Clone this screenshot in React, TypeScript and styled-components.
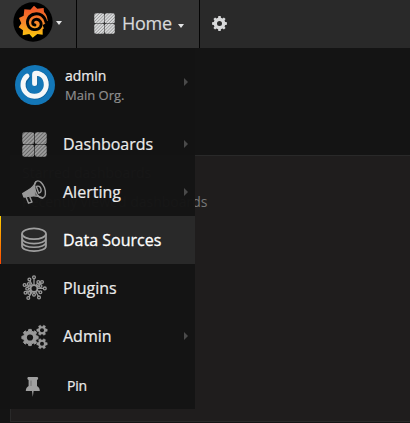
import React from 'react';
import styled, { createGlobalStyle } from 'styled-components';

const GlobalStyle = createGlobalStyle`
  * { box-sizing: border-box; }
  body {
    margin: 0;
    background: #141414;
    font-family: 'Open Sans', 'Noto Sans', sans-serif;
    overflow: hidden;
  }
  svg { display: block; flex: none; }
`;

const Page = styled.div`
  position: relative;
  display: flex;
  flex-direction: column;
  width: 410px;
  height: 423px;
  overflow: hidden;
`;

const NavBar = styled.header`
  display: flex;
  flex: none;
  height: 48px;
  background: #292929;
`;

const LogoButton = styled.div`
  display: flex;
  width: 77px;
  padding: 2px 0 0 13px;
  background: #333;
  border-right: 1px solid #050505;
`;

const HomeButton = styled.div`
  display: flex;
  width: 123px;
  padding: 0 0 0 17px;
  background: #333;
  border-right: 1px solid #050505;
`;

const HomeIcon = styled.div`
  padding-top: 13px;
`;

const HomeLabel = styled.span`
  margin-left: 7px;
  width: 51px;
  font-size: 18px;
  line-height: 47px;
  letter-spacing: -0.25px;
  color: #d8d9da;
  -webkit-text-stroke: 0.2px;
`;

const Caret = styled.span<{ $top: number; $left: number }>`
  width: 0;
  height: 0;
  margin: ${(p) => p.$top}px 0 0 ${(p) => p.$left}px;
  border: solid transparent;
  border-width: 4px 3.5px 0;
  border-top-color: #e3e4e5;
`;

const SettingsButton = styled.div`
  padding: 16px 12px;
`;

const Panel = styled.main`
  flex: none;
  height: 267px;
  margin: 107px 0 0 10px;
  padding: 8px 0 0 11px;
  border: 1px solid #292929;
  border-right: 0;
  background: #1f1d1d;
`;

const PanelHeading = styled.div`
  height: 29px;
  font-size: 14px;
  line-height: 18px;
  color: #777;
`;

const SideMenu = styled.nav`
  position: absolute;
  top: 48px;
  left: 0;
  width: 195px;
  height: 361px;
  background: rgba(20, 20, 20, 0.97);
`;

const MenuRow = styled.div<{ $active?: boolean }>`
  display: flex;
  align-items: center;
  height: 48px;
  padding-left: 20px;
  background: ${(p) => (p.$active ? '#292929' : 'transparent')};
  ${(p) =>
    p.$active &&
    `
    padding-left: 19px;
    border-left: 1px solid;
    border-image: linear-gradient(#ffd500, #ff4400 99%) 1;
  `}
`;

const MenuLabel = styled.span<{ $active?: boolean }>`
  width: 120px;
  margin-left: 15px;
  font-size: 16px;
  line-height: 24px;
  color: ${(p) => (p.$active ? '#fff' : '#ececec')};
  -webkit-text-stroke: ${(p) => (p.$active ? 0.3 : 0.2)}px;
  white-space: nowrap;
`;

const Arrow = styled.span`
  width: 0;
  height: 0;
  margin-left: 1px;
  border: solid transparent;
  border-width: 4.5px 0 4.5px 4.5px;
  border-left-color: #4a4a4a;
`;

const ProfileRow = styled.div`
  display: flex;
  height: 72px;
  padding: 17px 0 0 15px;
`;

const ProfileText = styled.div`
  width: 109px;
  margin-left: 10px;
  padding-top: 1px;
  font-size: 14px;
  line-height: 19px;
  color: #ececec;
  -webkit-text-stroke: 0.2px;
`;

const OrgName = styled.div`
  font-size: 13px;
  line-height: 20px;
  color: #8e8e8e;
`;

const ProfileArrow = styled.div`
  padding: 13px 0 0 9px;
`;

const PinRow = styled.div`
  display: flex;
  align-items: center;
  height: 49px;
  padding: 2px 0 0 25px;
`;

const PinLabel = styled.span`
  margin-left: 26px;
  font-size: 14px;
  line-height: 20px;
  letter-spacing: -0.2px;
  color: #ececec;
  -webkit-text-stroke: 0.2px;
`;

const gearPath = (cx: number, cy: number, outer: number, inner: number, teeth: number, turn = 0) => {
  const step = (Math.PI * 2) / teeth;
  const points: string[] = [];
  for (let i = 0; i < teeth; i++) {
    const a = i * step + turn;
    [
      [-0.31, inner],
      [-0.2, outer],
      [0.2, outer],
      [0.31, inner],
    ].forEach(([t, r]) => {
      points.push(`${(cx + Math.cos(a + t * step) * r).toFixed(2)} ${(cy + Math.sin(a + t * step) * r).toFixed(2)}`);
    });
  }
  return `M${points.join('L')}Z`;
};

const GrafanaLogo = () => (
  <svg width="40" height="40" viewBox="39 6 120 120">
    <defs>
      <linearGradient id="flame" x1="0" y1="18" x2="0" y2="112" gradientUnits="userSpaceOnUse">
        <stop offset="0.1" stopColor="#f05a28" />
        <stop offset="0.55" stopColor="#f7882a" />
        <stop offset="1" stopColor="#fbca0a" />
      </linearGradient>
    </defs>
    <circle cx="99" cy="66" r="59" fill="#000" />
    <path
      fill="url(#flame)"
      d="M102 17L112 26L131 24L132 36Q142 46 143 63L137 67L138 81L128 88L128 104L112 102L98 113L88 102L68 106L69 91L56 82L64 70L57 54L71 47L73 28L91 29Z"
    />
    <path
      fill="none"
      stroke="#000"
      strokeWidth="8.5"
      strokeLinecap="round"
      d="M148 70L138 67C134 47 119 39 104 42C86 45 79 62 84 75C90 92 113 93 121 81C128 69 119 56 107 58C96 60 95 74 105 75"
    />
    <path d="M128 75L147 65V93L132 87Z" fill="#000" />
  </svg>
);

const DashboardIcon = ({ size, id, color }: { size: number; id: string; color: string }) => (
  <svg width={size} height={size} viewBox="0 0 26 26">
    <defs>
      <pattern id={id} width="2.8" height="2.8" patternUnits="userSpaceOnUse" patternTransform="rotate(45)">
        <rect width="2.8" height="2.8" fill={color} fillOpacity="0.6" />
        <rect width="1.7" height="2.8" fill={color} />
      </pattern>
    </defs>
    {[0.3, 13.3].map((x) =>
      [0.3, 13.3].map((y) => (
        <rect
          key={`${x}-${y}`}
          x={x}
          y={y}
          width="12.4"
          height="12.4"
          rx="2.3"
          fill={`url(#${id})`}
        />
      )),
    )}
  </svg>
);

const DashboardMenuIcon = styled.div`
  width: 28px;
  padding-left: 2px;
`;

const Avatar = () => (
  <svg width="40" height="40" viewBox="0 0 40 40">
    <circle cx="20" cy="20" r="20" fill="#1377b8" />
    <g fill="none" strokeLinecap="round">
      <path
        d="M12.6 12C8.7 15 7.2 22 10.7 26.8C14.7 32.8 24 33.3 28.8 27.6C33.5 22 32.3 12.6 26 9.6C23.5 8.4 20.5 8.5 20.2 10V18.5"
        stroke="#0b609c"
        strokeWidth="5.6"
      />
      <path
        d="M12 11.2C7.5 15 6.7 21.8 10.2 26.6C14.5 32.6 24 32.7 28.6 27.1C33.2 21.5 31.6 11.8 25.3 9.2C22.5 8 19.6 8 19.6 9.5V18.5"
        stroke="#f5f7f8"
        strokeWidth="5"
      />
    </g>
  </svg>
);

const AlertIcon = () => (
  <svg width="28" height="28" viewBox="0 0 28 28" fill="none" stroke="#999" strokeWidth="1.4" strokeLinejoin="round">
    <path d="M2.7 15.5L7.6 12.6L10 18L4 19Z" fill="#999" />
    <path d="M8 12.5Q14 9 16 3.2M10.5 18Q16.5 17 23 20" />
    <path d="M6 19L8.6 25.2L12 24L9.6 18.4" />
    <path d="M8 12.5L14.5 8.5L15 16.8L10.5 18Z" fill="#999" />
    <ellipse cx="20" cy="11.5" rx="4.8" ry="9" transform="rotate(-20 20 11.5)" />
    <path d="M16.3 8.5C20.8 6.5 23 13.6 18.8 15.2Z" />
  </svg>
);

const DatabaseIcon = () => (
  <svg width="28" height="28" viewBox="0 0 28 28" fill="none" stroke="#a0a0a0" strokeWidth="1.7">
    <ellipse cx="14" cy="7.8" rx="12" ry="5.4" />
    <path d="M2 7.8V12C2 19.5 26 19.5 26 12V7.8M2 12V16C2 23 26 23 26 16V12M2 16V20C2 26.8 26 26.8 26 20V16" />
  </svg>
);

const PluginIcon = () => {
  const spokes = [
    [14, 3.2], [18.3, 8], [22, 8], [20.5, 12], [24.8, 14.4], [20.4, 18.3], [19, 23.4], [14, 20.8],
    [8.3, 24], [9.3, 19], [5.5, 18.8], [7.2, 14.8], [4.6, 11], [8.8, 10], [9.4, 5.6],
  ];
  return (
    <svg width="28" height="28" viewBox="0 0 28 28" fill="none" stroke="#999" strokeWidth="1.3">
      <circle cx="14" cy="14.5" r="3.4" strokeWidth="1.8" />
      {spokes.map(([x, y]) => {
        const d = Math.hypot(x - 14, y - 14.5);
        const ux = (x - 14) / d;
        const uy = (y - 14.5) / d;
        return (
          <g key={`${x}-${y}`}>
            <path d={`M${14 + ux * 3.6} ${14.5 + uy * 3.6}L${x - ux} ${y - uy}`} />
            <circle cx={x} cy={y} r="1.4" />
          </g>
        );
      })}
    </svg>
  );
};

const GearsIcon = () => (
  <svg width="28" height="28" viewBox="0 0 28 28" fill="none" stroke="#999">
    <path d={gearPath(10, 15.5, 8.2, 6.5, 8)} fill="#999" />
    <circle cx="10" cy="15.5" r="3.1" fill="#151515" stroke="none" />
    <path d={gearPath(22, 8.2, 5.3, 3.9, 6)} fill="#999" strokeWidth=".5" />
    <circle cx="22" cy="8.2" r="2" fill="#151515" stroke="none" />
    <path d={gearPath(22, 21.8, 5.3, 3.9, 6)} fill="#999" strokeWidth=".5" />
    <circle cx="22" cy="21.8" r="2" fill="#151515" stroke="none" />
  </svg>
);

const SettingsIcon = () => (
  <svg width="15" height="15" viewBox="0 0 15 15">
    <path
      fillRule="evenodd"
      fill="#d8d9da"
      d={`${gearPath(7.5, 7.5, 7.5, 5.9, 8)}M10 7.5A2.5 2.5 0 1 0 5 7.5A2.5 2.5 0 1 0 10 7.5Z`}
    />
  </svg>
);

const PinIcon = () => (
  <svg width="16" height="22" viewBox="0 0 16 22">
    <path
      fill="#a0a0a0"
      d="M3 2H12.4Q13.8 2.8 13 4Q12.5 4.8 12 5V11Q14.8 12.5 14.8 16H8.6L7.8 22L7 16H.8Q.8 12.5 3.6 11V5Q3 4.8 2.5 4Q2 2.8 3 2Z"
    />
    <path d="M6 5.5V11" stroke="#666" strokeWidth=".8" />
  </svg>
);

const menuItems = [
  {
    label: 'Dashboards',
    icon: (
      <DashboardMenuIcon>
        <DashboardIcon size={25} id="menu-hatch" color="#a0a0a0" />
      </DashboardMenuIcon>
    ),
    arrow: true,
  },
  { label: 'Alerting', icon: <AlertIcon />, arrow: true },
  { label: 'Data Sources', icon: <DatabaseIcon />, active: true },
  { label: 'Plugins', icon: <PluginIcon /> },
  { label: 'Admin', icon: <GearsIcon />, arrow: true },
];

export default function App() {
  return (
    <Page>
      <GlobalStyle />
      <NavBar>
        <LogoButton>
          <GrafanaLogo />
          <Caret $top={19} $left={3} />
        </LogoButton>
        <HomeButton>
          <HomeIcon>
            <DashboardIcon size={21} id="home-hatch" color="#dedfe0" />
          </HomeIcon>
          <HomeLabel>Home</HomeLabel>
          <Caret $top={24} $left={5} />
        </HomeButton>
        <SettingsButton>
          <SettingsIcon />
        </SettingsButton>
      </NavBar>
      <Panel>
        <PanelHeading>Starred dashboards</PanelHeading>
        <PanelHeading>Recently viewed dashboards</PanelHeading>
      </Panel>
      <SideMenu>
        <ProfileRow>
          <Avatar />
          <ProfileText>
            admin
            <OrgName>Main Org.</OrgName>
          </ProfileText>
          <ProfileArrow>
            <Arrow as="div" />
          </ProfileArrow>
        </ProfileRow>
        {menuItems.map((item) => (
          <MenuRow key={item.label} $active={item.active}>
            {item.icon}
            <MenuLabel $active={item.active}>{item.label}</MenuLabel>
            {item.arrow && <Arrow />}
          </MenuRow>
        ))}
        <PinRow>
          <PinIcon />
          <PinLabel>Pin</PinLabel>
        </PinRow>
      </SideMenu>
    </Page>
  );
}
